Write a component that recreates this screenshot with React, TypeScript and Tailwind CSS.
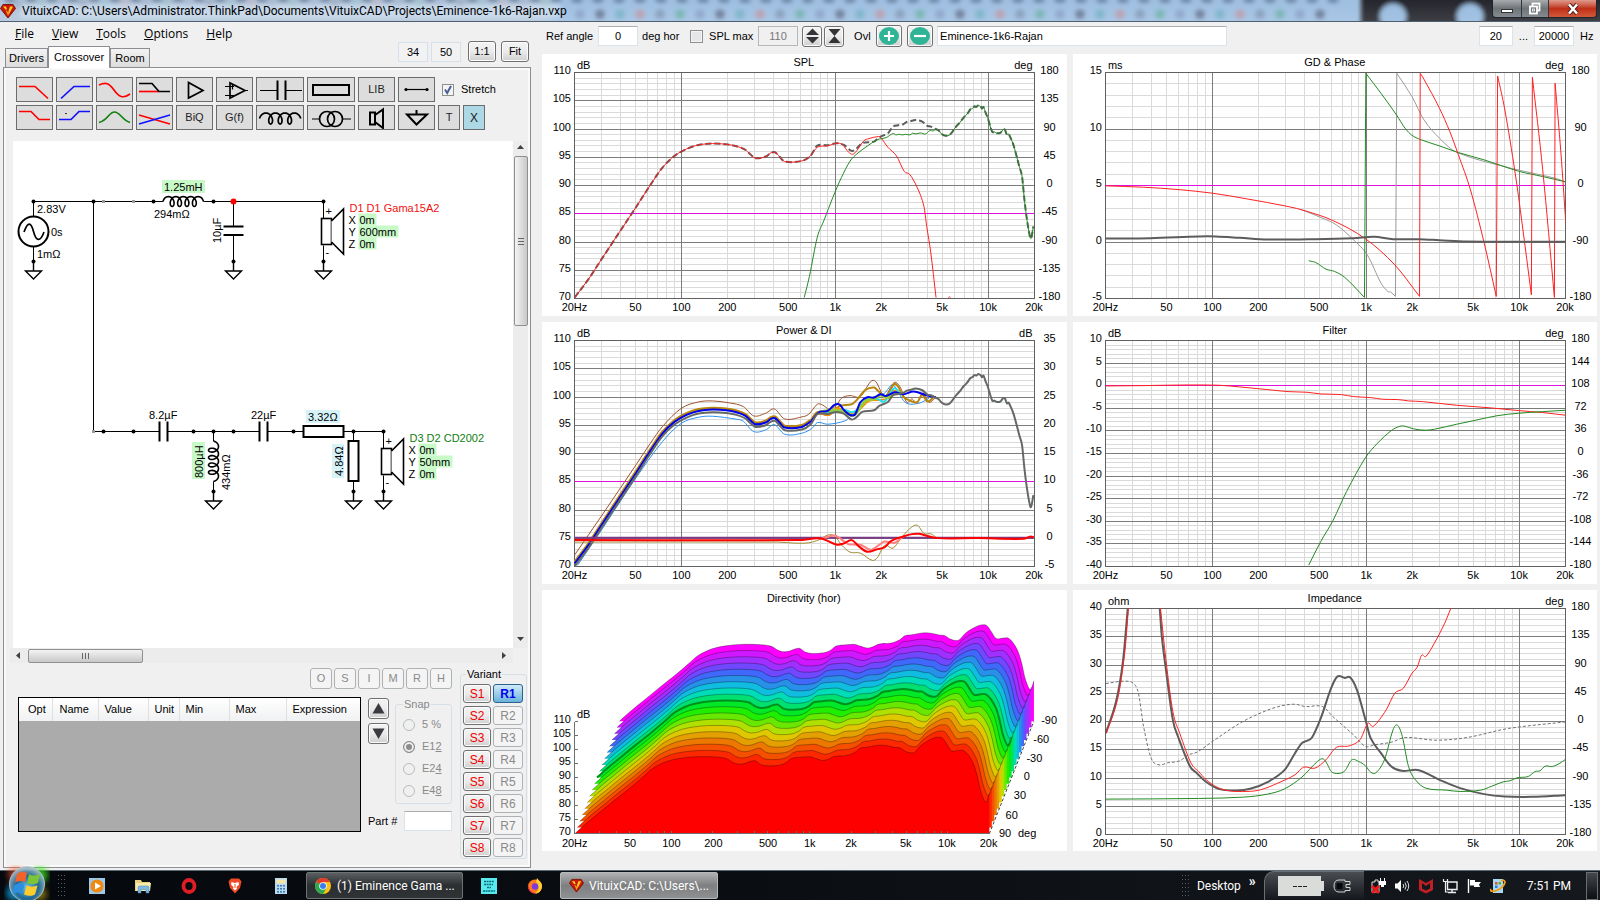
import { useId, type ReactNode } from "react";

/* ---------- curve helpers ---------- */

type Pt = [number, number];

function parse(s: string): Pt[] {
  return s.trim().split(/\s+/).map((p) => p.split(",").map(Number) as Pt);
}

function spline(p: Pt[]): string {
  let d = "";
  for (let i = 0; i < p.length - 1; i++) {
    const a = p[Math.max(i - 1, 0)];
    const b = p[i];
    const c = p[i + 1];
    const e = p[Math.min(i + 2, p.length - 1)];
    const dx = (c[0] - b[0]) / 3;
    const slope = (u: Pt, v: Pt) => (v[0] === u[0] ? 0 : (v[1] - u[1]) / (v[0] - u[0]));
    const m1 = slope(a, c) * dx;
    const m2 = slope(b, e) * dx;
    d += `C${b[0] + dx},${b[1] + m1} ${c[0] - dx},${c[1] - m2} ${c[0]},${c[1]}`;
  }
  return d;
}

/* "|" joins two pieces with a straight line, "/" lifts the pen between them. */
function curve(s: string): string {
  return s
    .split("/")
    .map((run) =>
      run
        .split("|")
        .map((part, i) => {
          const p = parse(part);
          return `${i ? "L" : "M"}${p[0][0]},${p[0][1]}${spline(p)}`;
        })
        .join("")
    )
    .join("");
}

type Trace = { d: string; color: string; w?: number; dash?: string; dy?: number; opacity?: number };

const TREBLE =
  "1180,388 1187,391 1196,402 1205,407 1218,406 1228,395 1234,386 1240,378 1250,367 1260,353 1270,343 1280,328 1286,326 1292,319 1297,321 1303,316 1310,320 1314,326 1318,321 1324,338 1330,353 1343,395 1350,396 1357,400 1368,398 1374,390 1380,389 1386,404 1391,402 1395,410 1404,432 1412,460 1422,500 1430,530 1437,600 1443,650 1450,695 1456,716 1463,680";
const BASS =
  "130,893 170,838 210,775 263,692 308,622 350,555 385,503 420,468 455,447 490,435 530,431 570,433 600,439 625,449 640,463 655,475 685,470 700,459 712,457 725,470 740,485 790,483 815,468";
const TOTAL =
  BASS +
  " 835,437 865,436 890,430 912,435 935,453 950,445 965,430 1000,425 1015,412 1040,400 1055,380 1070,376 1085,373 1095,366 1105,364 1120,360 1140,365 1155,378 1165,380 " +
  TREBLE;

const SPL: Trace[] = [
  { d: TOTAL, color: "#5c5c5c", w: 2, dash: "6 3" },
  {
    d:
      BASS +
      " 835,442 865,438 890,430 908,434 925,456 938,463 950,452 970,423 985,416 1012,410 1020,414 1040,442 1065,468 1088,515 1103,523 1125,562 1145,620 1153,680 1165,760 1180,893 / 1216,893 1218,891 1222,893",
    color: "#ff2020",
  },
  {
    d:
      "797,893 812,830 835,712 855,660 880,593 905,533 930,484 950,462 985,435 1010,419 1035,413 1055,401 1064,405 1072,403 1082,405 1092,403 1104,405 1112,400 1122,402 1134,399 1150,402 1162,392 1172,393 " +
      TREBLE,
    color: "#208a20",
  },
];

const GD: Trace[] = [
  {
    d: "700,630 760,655 800,675 850,720 890,765 930,850 950,875 958,877 972,890 | 976,220 1020,290 1055,360 1100,415 1150,457 1300,503 1440,536 1467,547",
    color: "#9a9a9a",
  },
  {
    d: "720,783 740,788 770,808 795,815 825,833 882,893 | 886,220 930,280 975,345 1000,385 1020,406 1045,419 1100,438 1155,458 1230,480 1330,514 1400,530 1467,546",
    color: "#208a20",
  },
  {
    d: "130,558 240,562 340,569 440,580 540,597 660,620 710,633 790,662 885,717 970,795 1042,890 | 1044,220 1055,238 1100,325 1130,395 1155,465 1190,570 1230,730 1265,890 | 1269,228 1290,330 1320,520 1340,670 1367,885 | 1370,232 1400,510 1434,893 | 1436,250 1453,460 1467,668",
    color: "#ff2020",
  },
  {
    d: "130,716 260,715 400,710 450,710 520,714 600,719 740,718 850,715 910,711 965,718 1040,718 1100,721 1180,725 1467,726",
    color: "#5c5c5c",
    w: 2,
  },
];

const LOW = BASS;
const POWER: Trace[] = [
  {
    d: "130,720 210,600 308,450 350,385 385,335 440,280 490,261 530,258 580,264 620,275 650,303 685,295 710,282 740,312 790,306 810,298 835,268 850,270 870,283 890,272 905,250 930,242 960,245 990,200 1005,200 1030,243 1058,203 1075,215 1095,262 1110,252 1125,265 1140,235 1160,262 1180,247",
    color: "#a0522d",
  },
  {
    d: "138,752 210,642 308,489 385,380 440,325 490,307 530,304 600,313 620,319 650,350 685,345 710,329 740,358 790,355 820,340 835,323 865,328 915,318 935,302 960,280 990,250 1030,235 1055,210 1090,262 1130,265 1160,250",
    color: "#2a90ee",
  },
  { d: LOW, color: "#b8860b", w: 3, dy: -151 },
  {
    d: "815,317 835,292 865,300 890,280 905,272 935,268 950,255 975,225 1000,218 1012,228 1035,245 1058,208 1070,215 1085,245 1100,255 1125,262 1140,240 1155,260 1175,245",
    color: "#b8860b",
    w: 2,
  },
  { d: "840,295 870,300 895,280 930,295 950,290 985,258 1015,255 1040,250 1058,228 1075,236", color: "#ff8c00", w: 2 },
  { d: "840,290 880,292 915,285 935,292 950,285 975,255 1010,252 1030,260 1058,220 1075,235", color: "#20e0f0", w: 2 },
  { d: "840,292 885,285 910,290 930,300 945,298 975,258 1000,252 1018,240 1040,248 1060,236 1085,235", color: "#9acd32", w: 3 },
  { d: LOW, color: "#0000f0", w: 2, dy: -147 },
  {
    d: "815,322 840,292 865,288 885,270 900,269 912,285 930,300 945,298 960,262 980,247 1000,248 1018,238 1035,243 1060,232 1085,238 1115,230 1150,240 1180,247",
    color: "#0000f0",
    w: 2,
  },
  { d: TOTAL, color: "#656965", w: 2, dy: -139 },
  { d: "130,669 1464,669", color: "#7a3a86", w: 2 },
  {
    d: "130,682 720,682 770,685 810,684 840,675 865,661 885,663 905,690 930,712 960,715 995,737 1010,728 1030,692 1055,700 1075,675 1100,645 1125,631 1145,656 1165,657 1180,668",
    color: "#a08a30",
  },
  { d: "845,672 885,662 900,670 925,688 960,690 990,705 1015,690 1030,680 1060,684 1085,665", color: "#ff8080", w: 2 },
  {
    d: "130,676 780,676 845,671 890,689 910,687 935,676 955,694 980,711 1010,703 1030,698 1050,678 1085,665 1110,658 1130,657 1150,662 1185,670 1300,670 1435,672 1455,665 1464,668",
    color: "#ff0000",
    w: 2,
  },
];

const FILTER: Trace[] = [
  {
    d: "130,213 240,212 370,210 460,211 520,216 600,224 660,230 715,232 755,237 815,239 850,245 900,248 935,253 980,254 1010,258 1050,260 1150,271 1250,279 1330,287 1400,293 1467,301",
    color: "#ff2020",
  },
  {
    d: "720,751 755,680 790,618 830,530 885,428 920,385 960,347 985,334 1000,334 1025,342 1060,346 1085,343 1150,328 1200,317 1270,302 1330,295 1400,290 1467,286",
    color: "#208a20",
  },
];

const IMPEDANCE: Trace[] = [
  {
    d: "130,311 180,304 210,310 225,340 240,440 262,535 285,555 310,549 345,543 370,525 395,517 440,485 520,430 590,395 640,378 680,373 710,380 760,380 790,410 850,465 885,500 910,495 960,487 1000,473 1090,481 1180,473 1300,446 1467,426",
    color: "#707070",
    dash: "3 2",
  },
  {
    d: "130,460 160,365 180,245 194,85 / 287,85 293,170 305,270 325,420 340,470 375,560 395,580 420,605 460,628 510,632 550,627 600,607 650,570 680,520 700,490 712,484 730,472 755,415 785,325 803,290 825,294 840,292 860,330 885,420 900,475 930,520 960,560 990,573 1040,571 1100,600 1160,625 1230,643 1290,650 1370,651 1467,646",
    color: "#5c5c5c",
    w: 2,
  },
  {
    d: "130,658 400,656 530,652 600,643 650,627 700,592 745,545 762,537 775,555 785,575 805,581 825,573 845,540 865,545 885,558 900,577 915,579 940,540 965,450 978,436 992,470 1010,560 1030,600 1060,625 1120,631 1160,635 1220,631 1250,620 1285,606 1305,603 1325,594 1358,590 1378,575 1392,573 1407,559 1428,560 1450,550 1467,538",
    color: "#208a20",
  },
  {
    d: "132,460 165,355 185,220 196,85 / 289,85 305,240 325,395 345,460 378,550 400,575 420,598 455,623 490,633 540,635 580,630 630,610 680,585 705,562 738,565 770,540 800,503 838,498 870,478 892,430 907,440 945,390 970,340 995,325 1020,280 1035,262 1048,226 1060,230 1085,190 1115,130 1133,85",
    color: "#ff2020",
  },
];

/* ---------- charts ---------- */

const PX = 32;
const PW = 460;
const PY = 18;
const PH = 226;

const fx = (f: number) => Math.round(PX + (Math.log10(f / 20) / 3) * PW) + 0.5;
const MINOR = [30, 40, 50, 60, 70, 80, 90, 200, 300, 400, 500, 600, 700, 800, 900, 2000, 3000, 4000, 5000, 6000, 7000, 8000, 9000];
const XLABELS: [number, string][] = [
  [20, "20Hz"], [50, "50"], [100, "100"], [200, "200"], [500, "500"],
  [1000, "1k"], [2000, "2k"], [5000, "5k"], [10000, "10k"], [20000, "20k"],
];

const CHART_TEXT = "font-['Liberation_Sans',sans-serif] text-[11px]";

type ChartProps = {
  title: string;
  left: string[];
  right: string[];
  unitL: string;
  unitR: string;
  divisions: number;
  top: number;
  marker?: number;
  traces: Trace[];
};

function Chart({ title, left, right, unitL, unitR, divisions, top, marker, traces }: ChartProps) {
  const clip = useId();
  const ly = (i: number, n: number) => Math.round(PY + (i / n) * PH) + 0.5;
  return (
    <figure className="bg-white">
      <svg viewBox="0 0 525 262" className="block h-auto w-full" role="img" aria-label={title}>
        <clipPath id={clip}>
          <rect x={PX} y={PY} width={PW + 1} height={PH + 1} />
        </clipPath>
        <g stroke="#dadada" strokeWidth={1} shapeRendering="crispEdges">
          {MINOR.map((f) => (
            <line key={f} x1={fx(f)} x2={fx(f)} y1={PY} y2={PY + PH} />
          ))}
          {Array.from({ length: divisions - 1 }, (_, i) => (
            <line key={i} x1={PX} x2={PX + PW} y1={ly(i + 1, divisions)} y2={ly(i + 1, divisions)} />
          ))}
        </g>
        <g stroke="#7c7c7c" strokeWidth={1} fill="none" shapeRendering="crispEdges">
          {[100, 1000, 10000].map((f) => (
            <line key={f} x1={fx(f)} x2={fx(f)} y1={PY} y2={PY + PH} />
          ))}
          {left.map((_, i) => (
            <line key={i} x1={PX} x2={PX + PW} y1={ly(i, left.length - 1)} y2={ly(i, left.length - 1)} />
          ))}
          <rect x={PX + 0.5} y={PY + 0.5} width={PW} height={PH} stroke="#606060" />
          {marker !== undefined && (
            <line x1={PX} x2={PX + PW} y1={ly(marker, left.length - 1)} y2={ly(marker, left.length - 1)} stroke="#e010e0" />
          )}
        </g>
        <g clipPath={`url(#${clip})`} fill="none" strokeLinejoin="round">
          {traces.map((t, i) => (
            <path
              key={i}
              d={curve(t.d)}
              transform={`translate(-12 ${-top / 3}) scale(0.3444 0.33333) translate(0 ${t.dy ?? 0})`}
              vectorEffect="non-scaling-stroke"
              stroke={t.color}
              strokeWidth={t.w ?? 1}
              strokeDasharray={t.dash}
            />
          ))}
        </g>
        <g className={CHART_TEXT} fill="#000">
          <text x={262} y={12} textAnchor="middle">{title}</text>
          <text x={35} y={15}>{unitL}</text>
          <text x={491} y={15} textAnchor="end">{unitR}</text>
          {left.map((t, i) => (
            <text key={i} x={29} y={ly(i, left.length - 1) + 2} textAnchor="end">{t}</text>
          ))}
          {right.map((t, i) => (
            <text key={i} x={508} y={ly(i, right.length - 1) + 2} textAnchor="middle">{t}</text>
          ))}
          {XLABELS.map(([f, t]) => (
            <text key={f} x={fx(f)} y={257} textAnchor="middle">{t}</text>
          ))}
        </g>
      </svg>
    </figure>
  );
}

const HUES = [
  "#ff0000", "#fc2800", "#f45000", "#ec7800", "#e4a000", "#e0c800", "#b0e000", "#68e800", "#20ee00", "#00e828",
  "#00e070", "#00dcb8", "#10bce0", "#2890e8", "#4068fa", "#7048ff", "#a030ff", "#d018ff", "#ff00ff",
];
const LAYER =
  "130,762 160,734 200,700 240,666 290,625 330,590 355,567 385,550 410,541 440,535 480,531 530,531 570,536 590,548 605,553 625,551 640,545 655,543 670,554 690,558 725,556 745,548 760,536 790,532 815,531 830,536 850,542 865,539 885,530 920,527 945,517 960,505 980,502 1000,498 1020,496 1040,498 1060,503 1075,504 1090,514 1105,519 1118,517 1135,498 1155,484 1175,474 1190,472 1200,476 1212,494 1225,513 1245,512 1260,512 1275,527 1290,555 1300,590 1310,635 1325,667 1335,640";

function Directivity() {
  const px = (x: number) => x / 2.904 - 12;
  const py = (y: number) => (y - 30) / 3;
  const d = curve(LAYER);
  const tick = (f: number) => 130 + (Math.log10(f / 20) / 3) * 1205;
  const xl = [130, 291, 411, 533, 692, 813, 933, 1092, 1212, 1333];
  const depth: [string, number, number][] = [
    ["-90", 1509, 420], ["-60", 1486, 476], ["-30", 1466, 533], ["0", 1444, 590],
    ["30", 1424, 647], ["60", 1400, 705], ["90", 1381, 760], ["deg", 1445, 760],
  ];
  return (
    <figure className="bg-white">
      <svg viewBox="0 0 525 262" className="block h-auto w-full" role="img" aria-label="Directivity (hor)">
        <g transform="translate(-12 -10) scale(0.3444 0.33333)">
          {HUES.map((_, i) => {
            const k = HUES.length - 1 - i;
            return (
              <g key={k} transform={`translate(${k * 7.2} ${k * -18.75})`}>
                <path d={`${d}L1335,762Z`} fill={HUES[k]} />
                <path
                  d={d}
                  fill="none"
                  stroke={k === 9 ? "#00901c" : "#000"}
                  strokeOpacity={k === 9 ? 1 : 0.3}
                  strokeWidth={k === 9 ? 2 : 1}
                  vectorEffect="non-scaling-stroke"
                />
              </g>
            );
          })}
          <line x1={1335} y1={762} x2={1464} y2={425} stroke="#404040" strokeDasharray="3 2" vectorEffect="non-scaling-stroke" />
        </g>
        <g stroke="#707070" shapeRendering="crispEdges">
          <line x1={px(130)} x2={px(130)} y1={py(425)} y2={py(762)} />
          <line x1={px(130)} x2={px(1335)} y1={py(762)} y2={py(762)} />
          {Array.from({ length: 8 }, (_, i) => (
            <line key={i} x1={px(130)} x2={px(130) + 3} y1={py(425 + i * 42)} y2={py(425 + i * 42)} />
          ))}
          {[...MINOR, 100, 1000, 10000].map((f) => (
            <line key={f} x1={px(tick(f))} x2={px(tick(f))} y1={py(762)} y2={py(762) - 3} />
          ))}
        </g>
        <g className={CHART_TEXT} fill="#000">
          <text x={262} y={12} textAnchor="middle">Directivity (hor)</text>
          <text x={35} y={128}>dB</text>
          {["110", "105", "100", "95", "90", "85", "80", "75", "70"].map((t, i) => (
            <text key={t} x={29} y={133 + i * 14} textAnchor="end">{t}</text>
          ))}
          {XLABELS.map(([f, t], i) => (
            <text key={f} x={px(xl[i])} y={257} textAnchor="middle">{t}</text>
          ))}
          {depth.map(([t, x, y]) => (
            <text key={t} x={px(x)} y={py(y) + 4} textAnchor="middle">{t}</text>
          ))}
        </g>
      </svg>
    </figure>
  );
}

/* ---------- schematic ---------- */

function coil(x0: number, y0: number, loops: number, p: number, r: number, ry: number) {
  const n = (loops + 0.5) * 24;
  let d = "";
  for (let i = 0; i <= n; i++) {
    const t = (i / 24) * 2 * Math.PI;
    const x = x0 + (p * i) / 24 + r * (1 - Math.cos(t));
    const y = y0 - ry * Math.sin(t);
    d += `${i ? "L" : "M"}${x.toFixed(2)},${y.toFixed(2)}`;
  }
  return d;
}

const Dot = ({ x, y }: { x: number; y: number }) => <circle cx={x} cy={y} r={2} fill="#000" stroke="none" />;
const Ground = ({ x, y }: { x: number; y: number }) => (
  <g>
    <Dot x={x} y={y} />
    <path d={`M${x},${y}v9.5M${x - 8},${y + 9.5}h16l-8,8z`} fill="none" strokeWidth={1.4} />
  </g>
);

function Speaker({ x, y, name, color, ypos, yw }: { x: number; y: number; name: string; color: string; ypos: string; yw: number }) {
  return (
    <g>
      <path d={`M${x},${y}v17M${x},${y + 44}v16`} />
      <rect x={x - 2} y={y + 17} width={10} height={26} fill="#fff" strokeWidth={1.6} />
      <path d={`M${x + 8},${y + 19.5}l12,-12v45l-12,-12`} fill="#fff" strokeWidth={1.6} />
      <Dot x={x} y={y} />
      <Ground x={x} y={y + 60} />
      <g stroke="none" fill="#c8fac8">
        <rect x={x + 35} y={y + 12} width={18} height={12} />
        <rect x={x + 35} y={y + 24} width={yw} height={12} />
        <rect x={x + 35} y={y + 36} width={18} height={12} />
      </g>
      <g stroke="none" fill="#000">
        <text x={x + 2} y={y + 13}>+</text>
        <text x={x + 2} y={y + 54}>-</text>
        <text x={x + 26} y={y + 10}  fill={color}>{name}</text>
        <text x={x + 25} y={y + 22}>X</text>
        <text x={x + 36} y={y + 22}>0m</text>
        <text x={x + 25} y={y + 34}>Y</text>
        <text x={x + 36} y={y + 34}>{ypos}</text>
        <text x={x + 25} y={y + 46}>Z</text>
        <text x={x + 36} y={y + 46}>0m</text>
      </g>
    </g>
  );
}

function Schematic() {
  return (
    <svg viewBox="13 141 500 507" className="block h-auto w-full bg-white font-['Liberation_Sans',sans-serif] text-[11px]" role="img" aria-label="Crossover schematic">
      <g stroke="#000" strokeWidth={1} fill="none">
        <path d="M33.5,216V201.5H163M203.5,201.5H323.5M93.5,201.5V431.5H159M33.5,247v15M233.5,201.5V226M233.5,235V261M168,431.5H259M267,431.5H303M343.5,431.5H383.5M213.5,431.5V441M213.5,481.5V491M353.5,431.5V441M353.5,481V491" />
        <circle cx={33.5} cy={231.5} r={15} strokeWidth={2} />
        <path d="M24,232C28,221 31,222 33.500,231.500S40,243 44,232" strokeWidth={1.7} />
        <path d={coil(163, 201.5, 4, 7.4, 3.6, 5)} strokeWidth={1.6} />
        <g transform="rotate(90 213.5 441)">
          <path d={coil(213.5, 441, 4, 7.4, 3.6, 5)} strokeWidth={1.6} />
        </g>
        <path d="M223.500,226.500h20M223.500,235h20M159.500,421.500v20M167.500,421.500v20M259.500,421.500v20M267.500,421.500v20" strokeWidth={2} />
        <rect x={303.5} y={426} width={40} height={11} strokeWidth={2} fill="#fff" />
        <rect x={348.5} y={441} width={10} height={40} strokeWidth={2} fill="#fff" />
        <Ground x={33.5} y={261.5} />
        <Ground x={233.5} y={261.5} />
        <Ground x={213.5} y={491.5} />
        <Ground x={353.5} y={491.5} />
        {[33.5, 93.5, 153.5, 213.5].map((x) => <Dot key={x} x={x} y={201.5} />)}
        {[103.5, 133.5, 193.5, 213.5, 233.5, 293.5, 353.5].map((x) => <Dot key={x} x={x} y={431.5} />)}
        <circle cx={233.5} cy={201.5} r={3} fill="#f00" stroke="none" />
        <g fill="#999" stroke="none">
          <rect x={102} y={200} width={3} height={3} />
          <rect x={132} y={200} width={3} height={3} />
          <rect x={92} y={430} width={3} height={3} />
        </g>
        <Speaker x={323.5} y={201.5} name="D1 D1 Gama15A2" color="#f01010" ypos="600mm" yw={40} />
        <Speaker x={383.5} y={431.5} name="D3 D2 CD2002" color="#108010" ypos="50mm" yw={34} />
      </g>
      <rect x={162} y={180} width={43} height={13} fill="#c8fac8" />
      <rect x={192} y={442} width={13} height={37} fill="#c8fac8" />
      <rect x={306} y={410} width={34} height={13} fill="#d6f3fa" />
      <rect x={332} y={444} width={12} height={34} fill="#d6f3fa" />
      <g fill="#000">
        <text x={37} y={213}>2.83V</text>
        <text x={51} y={236}>0s</text>
        <text x={37} y={258}>1mΩ</text>
        <text x={164} y={191}>1.25mH</text>
        <text x={154} y={218}>294mΩ</text>
        <text x={149} y={419}>8.2µF</text>
        <text x={251} y={419}>22µF</text>
        <text x={308} y={421}>3.32Ω</text>
        <text transform="translate(221 243) rotate(-90)">10µF</text>
        <text transform="translate(203 478) rotate(-90)">800µH</text>
        <text transform="translate(230 490) rotate(-90)">434mΩ</text>
        <text transform="translate(343 476) rotate(-90)">4.84Ω</text>
      </g>
    </svg>
  );
}

/* ---------- controls ---------- */

const BTN = "flex items-center justify-center rounded-[3px] border border-[#707070] bg-linear-to-b from-[#f3f3f3] via-[#ebebeb] to-[#cfcfcf] shadow-[inset_0_0_0_1px_#fcfcfc]";
const BTN_OFF = "flex items-center justify-center rounded-[3px] border border-[#adb2b5] bg-[#f4f4f4] text-[#8a8a8a]";
const BOX = "border border-[#dbe3ea] border-t-[#abadb3] bg-white";

function Tool({ label, wide, children }: { label: string; wide?: boolean; children: ReactNode }) {
  return (
    <button
      type="button"
      aria-label={label}
      className={(wide ? "w-12" : "w-[37px]") + " flex h-[25px] items-center justify-center border border-[#6c6c6c] bg-[#dddddd] text-[11px] text-[#222]"}
    >
      {children}
    </button>
  );
}

function Glyph({ w = 35, children }: { w?: number; children: ReactNode }) {
  return (
    <svg width={w} height={23} viewBox={`0 0 ${w} 23`} fill="none" stroke="#000" strokeWidth={1.7}>
      {children}
    </svg>
  );
}

function Toolbar() {
  return (
    <div className="flex flex-col gap-[3px]">
      <div className="flex items-center gap-[3px]">
        <Tool label="Low pass"><Glyph><path d="M2,8.500H18L31,20.500" stroke="#f00" /></Glyph></Tool>
        <Tool label="High pass"><Glyph><path d="M4,20.500L17,8.500H33" stroke="#11f" /></Glyph></Tool>
        <Tool label="All pass"><Glyph><path d="M2,7C9,4 12,5 17,12S26,21 33,16" stroke="#f00" /></Glyph></Tool>
        <Tool label="Notch"><Glyph><path d="M2,13.500H22" stroke="#f00" /><path d="M2,5.500H15L22,13.500H33" /></Glyph></Tool>
        <Tool label="Buffer"><Glyph><path d="M11.500,4.500V20L26,12.500Z" /></Glyph></Tool>
        <Tool label="Op amp"><Glyph><path d="M13,5V20L28,12.500Z" /><path d="M8,8.500H17M15.500,6V11.500M8,17.500H17M28,12.500h3" strokeWidth={1.2} /></Glyph></Tool>
        <Tool label="Capacitor" wide><Glyph w={46}><path d="M3,12.500H20M29,12.500H45" strokeWidth={1} /><path d="M20.500,2.500V22M28.500,2.500V22" strokeWidth={2} /></Glyph></Tool>
        <Tool label="Resistor" wide><Glyph w={46}><rect x={5} y={7} width={36} height={10} strokeWidth={2} /></Glyph></Tool>
        <Tool label="Library">LIB</Tool>
        <Tool label="Wire"><Glyph><path d="M7,11.500H28" strokeWidth={1.2} /><circle cx={7} cy={11.500} r={1.6} fill="#000" stroke="none" /><circle cx={28} cy={11.500} r={1.6} fill="#000" stroke="none" /></Glyph></Tool>
        <label className="ml-1 flex items-center gap-[7px] text-[11px]">
          <span className="relative flex size-3">
            <input type="checkbox" defaultChecked className="peer size-3 appearance-none border border-[#8e8f8f] bg-[#f4f4f4]" />
            <svg viewBox="0 0 12 12" className="pointer-events-none absolute inset-0 hidden peer-checked:block" fill="none" stroke="#4a5f97" strokeWidth={2}>
              <path d="M3,5.500L5.200,9L9,2" />
            </svg>
          </span>
          Stretch
        </label>
      </div>
      <div className="flex items-center gap-[3px]">
        <Tool label="Low shelf"><Glyph><path d="M2,5.500H14L22,13.500H33" stroke="#f00" /></Glyph></Tool>
        <Tool label="High shelf"><Glyph><path d="M2,13.500H14L22,5.500H33" stroke="#11f" /><rect x={8} y={7} width={2} height={1} fill="#333" stroke="none" /></Glyph></Tool>
        <Tool label="Peak"><Glyph><path d="M2,16.500C11,14 12,6 17.500,6S25,14 33,16.500" stroke="#108010" /></Glyph></Tool>
        <Tool label="Cross"><Glyph><path d="M2,9L33,18" stroke="#f00" /><path d="M2,18L33,9" stroke="#11f" /></Glyph></Tool>
        <Tool label="BiQ">BiQ</Tool>
        <Tool label="G(f)">G(f)</Tool>
        <Tool label="Inductor" wide><Glyph w={46}><path d={coil(2.5, 12.5, 3, 9.5, 4, 5.5)} /></Glyph></Tool>
        <Tool label="Transformer" wide><Glyph w={46}><path d="M4,13H12M34,13H43" strokeWidth={1.2} /><circle cx={19} cy={13} r={7.500} /><circle cx={27} cy={13} r={7.500} /></Glyph></Tool>
        <Tool label="Driver"><Glyph><rect x={11} y={6.500} width={5} height={12} strokeWidth={2} /><path d="M16,9L24,3.500V22L16,16" strokeWidth={2} /></Glyph></Tool>
        <Tool label="Ground"><Glyph><path d="M17.500,4V8.500M8,8.500H28L17.500,18.500Z" strokeWidth={2} /></Glyph></Tool>
        <button type="button" className="h-[25px] w-[22px] border border-[#6c6c6c] bg-[#dddddd] text-[11px] text-[#222]">T</button>
        <button type="button" aria-label="Delete" className="flex h-[25px] w-[22px] items-center justify-center border border-[#6c6c6c] bg-[#add8e6] text-[12px] text-[#222]">X</button>
      </div>
    </div>
  );
}

const GRIP = "border-[#666]";

function VScroll() {
  return (
    <div className="flex w-[15px] flex-col items-center bg-[#ececec]">
      <svg width={15} height={15} viewBox="0 0 15 15"><path d="M4,8L7.500,4L11,8Z" fill="#404040" /></svg>
      <div className="flex h-[170px] w-[14px] flex-col items-center justify-center gap-[2px] rounded-[2px] border border-[#8f8f8f] bg-linear-to-r from-[#f4f4f4] to-[#c8c8c8]">
        <i className={"w-[6px] border-t " + GRIP} />
        <i className={"w-[6px] border-t " + GRIP} />
        <i className={"w-[6px] border-t " + GRIP} />
      </div>
      <svg className="mt-auto" width={15} height={15} viewBox="0 0 15 15"><path d="M4,4L7.500,8L11,4Z" fill="#404040" /></svg>
    </div>
  );
}

function HScroll() {
  return (
    <div className="mr-[15px] flex h-[15px] items-center bg-[#ececec]">
      <svg width={18} height={15} viewBox="0 0 18 15"><path d="M10,4L6,7.500L10,11Z" fill="#404040" /></svg>
      <div className="flex h-[14px] w-[115px] items-center justify-center gap-[2px] rounded-[2px] border border-[#8f8f8f] bg-linear-to-b from-[#f4f4f4] to-[#c8c8c8]">
        <i className={"h-[6px] border-l " + GRIP} />
        <i className={"h-[6px] border-l " + GRIP} />
        <i className={"h-[6px] border-l " + GRIP} />
      </div>
      <svg className="ml-auto" width={18} height={15} viewBox="0 0 18 15"><path d="M7,4L11,7.500L7,11Z" fill="#404040" /></svg>
    </div>
  );
}

function PartsPanel() {
  const cols: [string, string][] = [
    ["Opt", "w-[33px] pl-[9px]"], ["Name", "w-[46px] pl-[7px]"], ["Value", "w-[50px] pl-[6px]"], ["Unit", "w-[31px] pl-[6px]"],
    ["Min", "w-[50px] pl-[6px]"], ["Max", "w-[57px] pl-[6px]"], ["Expression", "pl-[6px]"],
  ];
  return (
    <div className="flex pl-[5px]">
      <div className="w-[434px] pt-[5px]">
        <div className="flex justify-end gap-[2px]">
          {["O", "S", "I", "M", "R", "H"].map((t) => (
            <button key={t} type="button" disabled className={BTN_OFF + " h-[21px] w-[22px]"}>{t}</button>
          ))}
        </div>
        <div className="mt-2 flex gap-[7px]">
          <div className="h-[135px] w-[343px] border border-black bg-[#ababab]">
            <table className="w-full table-fixed border-collapse">
              <thead>
                <tr className="h-[23px] bg-linear-to-b from-white to-[#f0f1f2]">
                  {cols.map(([t, c]) => (
                    <th key={t} className={c + " border-r border-[#e0e0e0] p-0 text-left font-normal last:border-r-0"}>{t}</th>
                  ))}
                </tr>
              </thead>
            </table>
          </div>
          <div className="flex flex-1 flex-col">
            <div className="flex justify-between">
              <div className="flex flex-col gap-1 pt-px">
                <button type="button" aria-label="Move up" className={BTN + " h-[21px] w-[21px]"}>
                  <svg width={15} height={13} viewBox="0 0 15 13"><path d="M1.500,11.500L7.500,1L13.500,11.500Z" fill="#3a3a40" /></svg>
                </button>
                <button type="button" aria-label="Move down" className={BTN + " h-[21px] w-[21px]"}>
                  <svg width={15} height={13} viewBox="0 0 15 13"><path d="M1.500,1.500L7.500,12L13.500,1.500Z" fill="#3a3a40" /></svg>
                </button>
              </div>
              <fieldset disabled className="flex h-[107px] w-[57px] flex-col gap-[9px] rounded-[3px] border border-[#d5dfe5] pt-[7px] pl-[7px] text-[#8a8a8a]">
                <legend className="px-px leading-[14px]">Snap</legend>
                {[["5 %", ""], ["E1", "2"], ["E2", "4"], ["E4", "8"]].map(([a, b]) => (
                  <label key={a} className="flex items-center gap-[7px] leading-[13px]">
                    <input
                      type="radio"
                      name="snap"
                      defaultChecked={a === "E1"}
                      className="size-3 shrink-0 appearance-none rounded-full border border-[#b8bcbf] bg-[#f0f0f0] checked:border-[#8a8a8a] checked:bg-[#8c8c8c] checked:shadow-[inset_0_0_0_2px_#eee]"
                    />
                    <span>{a}<u>{b}</u></span>
                  </label>
                ))}
              </fieldset>
            </div>
            <label className="mt-[7px] flex items-center justify-between whitespace-nowrap">
              Part #
              <input type="text" className={BOX + " h-5 w-12"} />
            </label>
          </div>
        </div>
      </div>
      <fieldset className="mt-1 ml-2 h-[192px] w-[67px] self-start rounded-[3px] border border-[#d5dfe5] pt-[3px] pl-[2px]">
        <legend className="ml-[3px] px-px leading-[14px]">Variant</legend>
        <div className="grid grid-cols-[28px_30px] gap-x-[2px] gap-y-[3px]">
          {[1, 2, 3, 4, 5, 6, 7, 8].flatMap((n) => [
            <button key={`s${n}`} type="button" className={BTN + " h-[19px] text-[12px] text-[#f00000]"}>S{n}</button>,
            n === 1 ? (
              <button key="r1" type="button" className="h-[19px] rounded-[3px] border border-[#2c628b] bg-linear-to-b from-[#d0eaf8] to-[#68b3db] text-[12px] leading-4 font-bold text-[#0000f0]">R1</button>
            ) : (
              <button key={`r${n}`} type="button" disabled className={BTN_OFF + " h-[19px] text-[12px]"}>R{n}</button>
            ),
          ])}
        </div>
      </fieldset>
    </div>
  );
}

function Logo({ size = 16 }: { size?: number }) {
  return (
    <svg width={size} height={size} viewBox="0 0 16 16" className="shrink-0">
      <path d="M3,1.500H13L15.500,5.500L8,15L0.500,5.500Z" fill="#c8180c" stroke="#7d1408" />
      <path d="M3,3.500H6L7,6.500H5.500ZM13,3.500H10L8.500,8L9,11Z" fill="#ffd220" />
      <path d="M5.500,6.500L8,13L10,8.500L8,9Z" fill="#f0a018" />
    </svg>
  );
}

function TitleBar() {
  const blobs = Array.from({ length: 64 }, (_, i) => i);
  const tint = ["#66799c", "#b97d85", "#4f9fb0", "#3c4560", "#6f86b4", "#48a38b"];
  return (
    <header className="relative flex h-[22px] items-center justify-between overflow-hidden border-b border-[#4e5f70] bg-[#9cbcdd]">
      <svg className="absolute inset-0 h-full w-full" viewBox="0 0 1600 22" preserveAspectRatio="none" aria-hidden="true">
        <defs>
          <filter id="soft" x="-5%" y="-50%" width="110%" height="200%"><feGaussianBlur stdDeviation="2" /></filter>
          <linearGradient id="fade" x1="0" x2="0" y1="0" y2="1">
            <stop offset="0" stopColor="#fff" stopOpacity="0.1" />
            <stop offset="1" stopColor="#fff" stopOpacity="0.2" />
          </linearGradient>
        </defs>
        <rect width="1600" height="22" fill="#94b8de" />
        <g filter="url(#soft)">
          <rect x="-10" y="-6" width="560" height="34" fill="#a9bed6" />
          {blobs.map((i) => (
            <g key={i}>
              <ellipse cx={10 + i * 21} cy={0} rx={6} ry={3} fill="#4b6586" opacity={0.8} />
              <ellipse cx={i < 26 ? 20 + i * 21 : 60 + i * 20} cy={i < 26 ? 5 : 15} rx={5} ry={5} fill={tint[(i * 5) % 6]} opacity={i < 26 ? 0.35 : 0.65} />
            </g>
          ))}
          <rect x="20" y="4" width="540" height="15" fill="#c6d8ec" opacity="0.75" />
          <rect x="1361" y="-8" width="260" height="40" fill="#0b1119" />
          <circle cx="1393" cy="17" r="13" fill="#8db4dc" />
          <circle cx="1470" cy="17" r="13" fill="#8db4dc" />
        </g>
        <rect width="1600" height="22" fill="url(#fade)" />
      </svg>
      <div className="relative flex items-center gap-[6px] font-['Roboto',sans-serif] text-[12px] text-black">
        <Logo />
        <h1>VituixCAD: C:\Users\Administrator.ThinkPad\Documents\VituixCAD\Projects\Eminence-1k6-Rajan.vxp</h1>
      </div>
      <div className="relative mr-[3px] flex h-[18px] self-start overflow-hidden rounded-b-[4px] border border-t-0 border-[#20262c]">
        <button type="button" aria-label="Minimize" className="flex w-[29px] items-center justify-center border-r border-[#30383f] bg-linear-to-b from-[#a9abae] via-[#6f7478] via-50% to-[#858b90]">
          <svg width={12} height={16} viewBox="0 0 12 16"><rect x={0.500} y={8.500} width={11} height={3} fill="#fff" stroke="#333" /></svg>
        </button>
        <button type="button" aria-label="Restore" className="flex w-[27px] items-center justify-center border-r border-[#30383f] bg-linear-to-b from-[#a9abae] via-[#6f7478] via-50% to-[#858b90]">
          <svg width={14} height={14} viewBox="0 0 14 14" fill="none" stroke="#fff" strokeWidth={1.8}><rect x={4.500} y={1.500} width={7} height={7} /><rect x={2} y={4.500} width={7} height={7} fill="#70767b" /><rect x={4.500} y={7} width={2} height={2} strokeWidth={0.8} /></svg>
        </button>
        <button type="button" aria-label="Close" className="flex w-[47px] items-center justify-center bg-linear-to-b from-[#dd9a8c] via-[#bf2e16] via-50% to-[#d4573a]">
          <svg width={14} height={12} viewBox="0 0 14 12"><path d="M3,1.500L11,10.500M11,1.500L3,10.500" stroke="#4a1a14" strokeWidth={4.200} /><path d="M3,1.500L11,10.500M11,1.500L3,10.500" stroke="#fff" strokeWidth={2.600} /></svg>
        </button>
      </div>
    </header>
  );
}

function LeftPane() {
  return (
    <section className="flex w-[534px] shrink-0 flex-col pr-[3px] pl-[3px]">
      <div className="flex justify-between">
        <div className="flex flex-col">
          <nav className="flex h-6 items-center gap-[18px] pl-3 font-['Open_Sans','Noto_Sans',sans-serif] text-[12px]">
            <a href="#file"><u>F</u>ile</a>
            <a href="#view"><u>V</u>iew</a>
            <a href="#tools"><u>T</u>ools</a>
            <a href="#options"><u>O</u>ptions</a>
            <a href="#help"><u>H</u>elp</a>
          </nav>
          <div role="tablist" className="flex h-[21px] items-end pl-[2px] text-[11px]">
            <button role="tab" type="button" className="h-[19px] w-[43px] border border-b-0 border-[#8c8e94] bg-linear-to-b from-[#f3f3f3] to-[#dcdcdc]">Drivers</button>
            <button role="tab" type="button" aria-selected="true" className="z-10 -mb-px h-[22px] w-[62px] border border-b-0 border-[#8c8e94] bg-white">Crossover</button>
            <button role="tab" type="button" className="h-[19px] w-[40px] border border-b-0 border-[#8c8e94] bg-linear-to-b from-[#f3f3f3] to-[#dcdcdc]">Room</button>
          </div>
        </div>
        <div className="mr-[2px] mb-[5px] flex items-center gap-[5px] self-end text-[11px]">
          <input aria-label="Position X" defaultValue="34" className="h-5 w-[30px] border border-[#d4e0ea] bg-[#f2f2f2] text-center" />
          <input aria-label="Position Y" defaultValue="50" className="-ml-[2px] mr-[2px] h-5 w-[30px] border border-[#d4e0ea] bg-[#f2f2f2] text-center" />
          <button type="button" className={BTN + " h-[21px] w-[28px]"}>1:1</button>
          <button type="button" className={BTN + " h-[21px] w-[28px]"}>Fit</button>
        </div>
      </div>
      <div className="flex flex-1 flex-col border border-[#8c8e94] px-[2px] shadow-[inset_0_0_0_2px_#fafafa]">
        <div className="flex flex-col pl-1">
          <div className="pt-[9px] pb-[11px] pl-[6px]">
            <Toolbar />
          </div>
          <div className="flex pl-[3px]">
            <div className="w-[500px]"><Schematic /></div>
            <VScroll />
          </div>
          <HScroll />
          <div className="pl-[3px]"><PartsPanel /></div>
        </div>
      </div>
    </section>
  );
}

function RightPane() {
  return (
    <main className="min-w-0 flex-1 pr-[3px] pb-[15px] pl-2">
      <div className="flex h-8 items-center pb-1 pl-1 text-[11px] whitespace-nowrap">
        <label className="flex items-center gap-[5px]">
          Ref angle
          <input defaultValue="0" className={BOX + " h-5 w-10 text-center"} />
        </label>
        <span className="ml-1 w-[48px]">deg hor</span>
        <label className="flex w-[65px] items-center gap-[6px]">
          <input type="checkbox" className="size-[13px] shrink-0 appearance-none border border-[#8e8f8f] bg-[#e4e6e8] shadow-[inset_0_0_0_1px_#f4f4f4]" />
          SPL max
        </label>
        <input aria-label="SPL max value" disabled defaultValue="110" className="ml-[3px] h-5 w-10 border border-[#b4b8bc] bg-[#f0f0f0] text-center text-[#777]" />
        <button type="button" aria-label="Expand range" className={BTN + " ml-1 h-[21px] w-5"}>
          <svg width={15} height={16} viewBox="0 0 15 16" fill="#333338"><path d="M1,7L7.500,0.500L14,7ZM1,9L7.500,15.500L14,9Z" /></svg>
        </button>
        <button type="button" aria-label="Compress range" className={BTN + " ml-[2px] h-[21px] w-5"}>
          <svg width={15} height={16} viewBox="0 0 15 16" fill="#333338"><path d="M1.500,1H13.500L7.500,8ZM1.500,15H13.500L7.500,8Z" /></svg>
        </button>
        <span className="ml-[10px] w-[22px]">Ovl</span>
        <button type="button" aria-label="Add overlay" className={BTN + " h-[22px] w-[26px]"}>
          <svg width={22} height={18} viewBox="0 0 22 18"><ellipse cx={11} cy={9} rx={10} ry={9} fill="#2fb496" /><path d="M11,4V14M6,9H16" stroke="#fff" strokeWidth={2.200} /></svg>
        </button>
        <button type="button" aria-label="Remove overlay" className={BTN + " ml-[5px] h-[22px] w-[26px]"}>
          <svg width={22} height={18} viewBox="0 0 22 18"><ellipse cx={11} cy={9} rx={10} ry={9} fill="#2fb496" /><path d="M5,9H17" stroke="#fff" strokeWidth={2.200} /></svg>
        </button>
        <input aria-label="Overlay name" defaultValue="Eminence-1k6-Rajan" className={BOX + " ml-1 h-5 w-[290px] pl-[2px] text-[11px]"} />
        <div className="ml-auto flex items-center gap-[6px]">
          <input aria-label="Minimum frequency" defaultValue="20" className={BOX + " h-5 w-[34px] text-center"} />
          <span>...</span>
          <input aria-label="Maximum frequency" defaultValue="20000" className={BOX + " h-5 w-10 text-center"} />
          <span className="w-[17px]">Hz</span>
        </div>
      </div>
      <div className="grid grid-cols-2 gap-[6px]">
        <Chart title="SPL" unitL="dB" unitR="deg" divisions={40} top={162} marker={5} traces={SPL}
          left={["110", "105", "100", "95", "90", "85", "80", "75", "70"]}
          right={["180", "135", "90", "45", "0", "-45", "-90", "-135", "-180"]} />
        <Chart title="GD & Phase" unitL="ms" unitR="deg" divisions={20} top={162} marker={2} traces={GD}
          left={["15", "10", "5", "0", "-5"]} right={["180", "90", "0", "-90", "-180"]} />
        <Chart title="Power & DI" unitL="dB" unitR="dB" divisions={40} top={21} marker={5} traces={POWER}
          left={["110", "105", "100", "95", "90", "85", "80", "75", "70"]}
          right={["35", "30", "25", "20", "15", "10", "5", "0", "-5"]} />
        <Chart title="Filter" unitL="dB" unitR="deg" divisions={50} top={21} marker={2} traces={FILTER}
          left={["10", "5", "0", "-5", "-10", "-15", "-20", "-25", "-30", "-35", "-40"]}
          right={["180", "144", "108", "72", "36", "0", "-36", "-72", "-108", "-144", "-180"]} />
        <Directivity />
        <Chart title="Impedance" unitL="ohm" unitR="deg" divisions={40} top={30} traces={IMPEDANCE}
          left={["40", "35", "30", "25", "20", "15", "10", "5", "0"]}
          right={["180", "135", "90", "45", "0", "-45", "-90", "-135", "-180"]} />
      </div>
    </main>
  );
}

/* ---------- taskbar ---------- */

function Icon({ label, children }: { label: string; children: ReactNode }) {
  return (
    <button type="button" aria-label={label} className="flex size-4 shrink-0">
      <svg width={16} height={16} viewBox="0 0 16 16">{children}</svg>
    </button>
  );
}

function Grip() {
  return (
    <svg width={8} height={22} viewBox="0 0 8 22" fill="#555c62">
      {[0, 1, 2, 3, 4, 5].flatMap((r) => [0, 1, 2].map((c) => <rect key={`${r}${c}`} x={c * 3} y={r * 4} width={1} height={1} />))}
    </svg>
  );
}

function Taskbar() {
  return (
    <footer className="relative flex h-[30px] items-center border-t border-[#5b6b78] bg-linear-to-r from-[#05080c] via-[#0b0f14] to-[#15191e] font-['Roboto',sans-serif] text-[12px] text-white">
      <button type="button" aria-label="Start" className="absolute bottom-0 left-[4px] h-[35px] w-[46px]">
        <svg width={46} height={35} viewBox="0 0 46 35">
          <defs>
            <radialGradient id="orb" cx="50%" cy="60%" r="55%">
              <stop offset="0" stopColor="#7fd8ff" />
              <stop offset="0.6" stopColor="#1d6ea0" />
              <stop offset="1" stopColor="#9fb9c4" />
            </radialGradient>
            <filter id="glow"><feGaussianBlur stdDeviation="3" /></filter>
          </defs>
          <g filter="url(#glow)">
            <circle cx={12} cy={9} r={8} fill="#ff5a30" opacity={0.6} />
            <circle cx={36} cy={10} r={8} fill="#40e020" opacity={0.8} />
            <circle cx={10} cy={28} r={8} fill="#10b0f0" opacity={0.7} />
            <circle cx={36} cy={29} r={7} fill="#f0d020" opacity={0.5} />
          </g>
          <circle cx={23} cy={19} r={17.500} fill="url(#orb)" stroke="#b9ced8" opacity={0.9} />
          <path d="M13,9C17,6 20,6.500 23,8L21,17C18,15.500 15,15.500 11,17.500Z" fill="#f2622a" />
          <path d="M25,9C28,11 32,11 36,9L34,18C30,20 26,19.500 23,18Z" fill="#7cc534" />
          <path d="M10.500,20C14,18 17,18 20.500,19.500L18,28.500C15,27 12,27 8.500,28.500Z" fill="#2d8fe0" />
          <path d="M22.500,20.500C26,22 30,22 33.500,20.500L31,29.500C28,31.500 24,31 20,29.500Z" fill="#fccb2e" />
        </svg>
      </button>
      <div className="flex items-center pl-[58px]">
        <Grip />
        <div className="ml-[23px] flex items-center gap-[30px]">
          <Icon label="Media player"><rect width={16} height={16} fill="#9cc9ea" /><circle cx={8} cy={8} r={6.600} fill="#f08a14" /><path d="M6,4.500L12,8L6,11.500Z" fill="#fff" /></Icon>
          <Icon label="Explorer"><path d="M0,2H6L7,4H15V13H0Z" fill="#e8d27a" /><path d="M1,5H16L15,13H1Z" fill="#f7ebab" /><path d="M3,15V9.500Q3,8 4.500,8H12.500Q14,8 14,9.500V15H11V11.500H6V15Z" fill="#7fb9e4" stroke="#4c86b4" strokeWidth={0.500} /></Icon>
          <Icon label="Opera"><ellipse cx={8} cy={8} rx={5.500} ry={6} fill="none" stroke="#e01c24" strokeWidth={3.800} /></Icon>
          <Icon label="Brave"><path d="M4,0.500H12L14.500,3.500L13,10L8,15.500L3,10L1.500,3.500Z" fill="#f04a24" /><path d="M4.500,4L8,5L11.500,4L12,6.500L9.500,9L10,10.500L8,12.500L6,10.500L6.500,9L4,6.500Z" fill="#fff" /><path d="M8,6V10" stroke="#f04a24" /></Icon>
          <Icon label="Calculator"><rect x={2} width={12} height={16} fill="#b9dbf2" /><rect x={3.500} y={1.500} width={9} height={4} fill="#f6e5a8" />{[7, 10, 13].flatMap((y) => [4, 7, 10].map((x) => <rect key={`${x}${y}`} x={x} y={y} width={2} height={1.600} fill="#3f7fb5" />))}</Icon>
        </div>
        <button type="button" className="ml-[17px] flex h-[27px] w-[157px] items-center gap-[6px] rounded-[2px] border border-[#6d7275] bg-linear-to-b from-[#5c5f61] via-[#2c2f31] via-50% to-[#303335] pl-2 whitespace-nowrap">
          <svg width={16} height={16} viewBox="0 0 16 16" className="shrink-0">
            <circle cx={8} cy={8} r={8} fill="#fbc116" />
            <path d="M8,8L1.070,4A8,8 0 0 1 14.930,4L8,4Z" fill="#e33b2e" />
            <path d="M8,8L1.070,4A8,8 0 0 0 8,16L11.500,10Z" fill="#2da94f" />
            <circle cx={8} cy={8} r={3.800} fill="#fff" />
            <circle cx={8} cy={8} r={3} fill="#3b7ded" />
          </svg>
          (1) Eminence Gama ...
        </button>
        <div className="ml-[18px] flex items-center gap-[30px]">
          <Icon label="LEAP"><rect width={16} height={16} fill="#58eaee" /><path d="M3,3.500H13M3,6.500H12M6,9.500H10M2,13H14" stroke="#0b6d78" strokeWidth={1.400} strokeDasharray="2 0.600" /></Icon>
          <Icon label="Firefox"><circle cx={8} cy={8.500} r={7} fill="#ff7a1a" /><path d="M10,0C12,3 15.500,4.500 15,9C14.500,13 11,16 8,15.500C12,13 13,8 9,4Z" fill="#ffcf30" /><path d="M1,6C2,12 4,14 9,15.500C4,16 0,12 1,6Z" fill="#e8225c" /><circle cx={8} cy={8.500} r={3.200} fill="#7a3be0" /></Icon>
        </div>
        <button type="button" className="ml-[17px] flex h-[27px] w-[158px] items-center gap-[5px] rounded-[2px] border border-[#b5b7b8] bg-linear-to-b from-[#b0b1b2] via-[#7d7f80] via-50% to-[#8e9091] pl-2 whitespace-nowrap">
          <Logo size={15} />
          VituixCAD: C:\Users\...
        </button>
      </div>
      <div className="ml-auto flex h-full items-center">
        <Grip />
        <span className="ml-[7px]">Desktop</span>
        <span className="-mt-2 ml-2 text-[14px] font-bold">»</span>
        <div className="ml-2 flex h-full items-center rounded-tl-[10px] border-t border-l border-[#6a7075] bg-linear-to-b from-[#4a4e52] to-[#14171b] pr-[13px] pl-[13px]">
          <svg width={46} height={20} viewBox="0 0 46 20"><path d="M0,0H43V5H46V15H43V20H0Z" fill="#d9dcd8" /><path d="M15,10.500h4M20,10.500h4M25,10.500h4" stroke="#222" strokeWidth={1.200} /></svg>
          <svg className="ml-[9px]" width={18} height={14} viewBox="0 0 18 14" fill="none" stroke="#d0d0d0"><path d="M17,2.500H12V1H6Q1,1 1,7T6,13H12V11.500H17V8.500H13V5.500H17Z" /><path d="M4,4.500H9V9.500H4Z" fill="#08090a" stroke="#08090a" /></svg>
        </div>
        <div className="ml-[6px] flex items-center gap-2">
          <Icon label="Power"><path d="M2,4H5V2H8V4H9V14H2Z" fill="none" stroke="#ddd" /><path d="M9,3H16V7H14V9H11V7H9ZM10,0H11V3H10ZM14,0H15V3H14Z" fill="#fff" /><path d="M2,8L9,15M9,8L2,15" stroke="#f01818" strokeWidth={2.600} /></Icon>
          <Icon label="Volume"><path d="M1,5.500H3.500L7,2V14L3.500,10.500H1Z" fill="#fff" /><path d="M9,6Q10.500,8 9,10M11,4.500Q13.500,8 11,11.500M13,3Q16.500,8 13,13" fill="none" stroke="#ddd" /></Icon>
          <Icon label="Antivirus"><path d="M1,1L8,5L15,1V12L8,15.500L1,12Z" fill="#c01f24" /><path d="M4,5L8,8L12,5V10.500L8,12.500L4,10.500Z" fill="#14181c" /></Icon>
          <Icon label="Network"><path d="M5.500,4H15V11.500H5.500ZM10,12V14.500M6,14.500H14" fill="none" stroke="#eee" strokeWidth={1.400} /><path d="M1.500,1V3.500H5.500V1M3.500,3.500V14H6" fill="none" stroke="#eee" strokeWidth={1.200} /></Icon>
          <Icon label="Action center"><path d="M2.500,1V15" stroke="#fff" strokeWidth={1.400} /><path d="M4,2H9V4H15L13,6.500L14,9H8V7.500H4Z" fill="#fff" /></Icon>
          <Icon label="Updates"><rect x={3} y={1} width={10} height={14} fill="#a9d8f5" /><path d="M5,4H7.500V6.500H5Z" fill="#e0502a" /><path d="M8.500,4H11V6.500H8.500Z" fill="#5cb030" /><path d="M5,7.500H7.500V10H5Z" fill="#2d80d8" /><path d="M1,11Q-1,14 5,13Q14,10 15,4Q14,1 11,3" fill="none" stroke="#f0a020" strokeWidth={1.800} /></Icon>
        </div>
        <time className="ml-[21px]">7:51 PM</time>
        <button type="button" aria-label="Show desktop" className="mr-[2px] ml-[15px] h-[28px] w-3 border border-[#6a6e72] bg-linear-to-b from-[#44484c] to-[#0d0f12]" />
      </div>
    </footer>
  );
}

export default function App() {
  return (
    <div className="flex min-h-screen flex-col bg-[#f0f0f0] font-['Liberation_Sans',sans-serif] text-[11px] text-black">
      <TitleBar />
      <div className="flex flex-1 pb-[2px]">
        <LeftPane />
        <RightPane />
      </div>
      <Taskbar />
    </div>
  );
}
